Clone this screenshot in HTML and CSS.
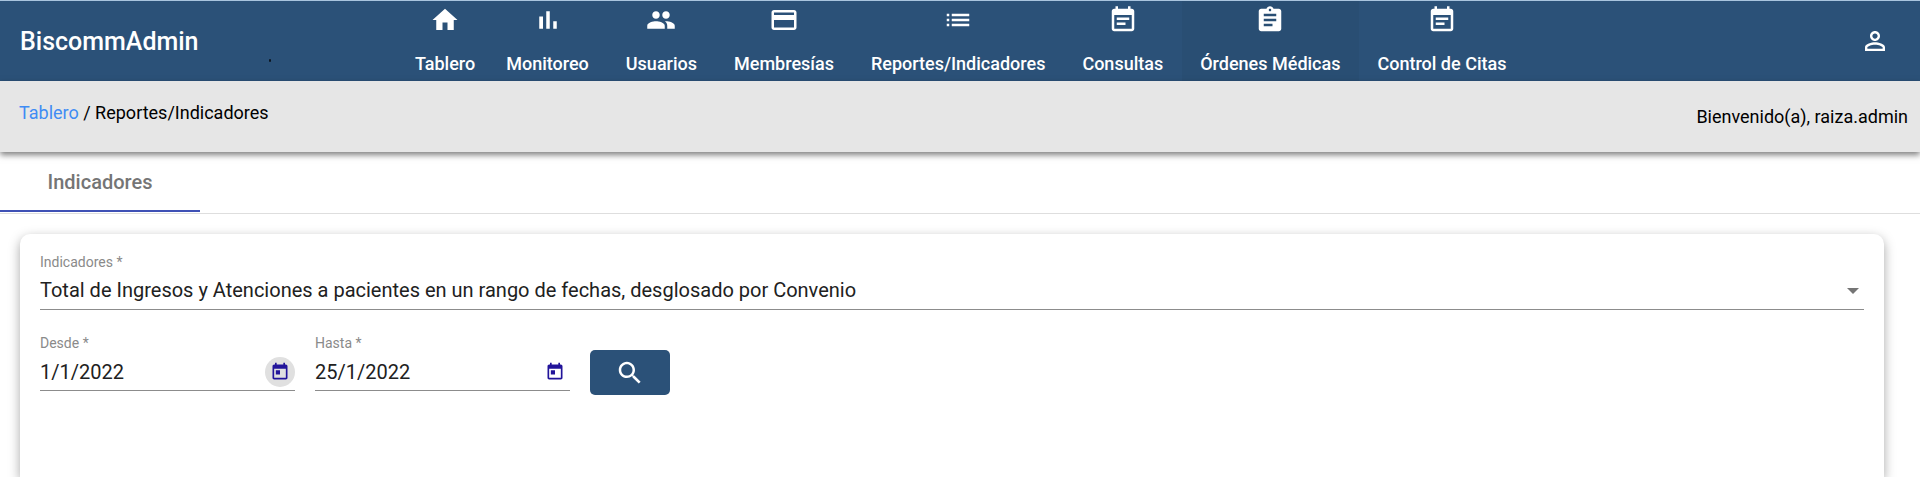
FILE: index.html
```html
<!DOCTYPE html>
<html lang="es">
<head>
<meta charset="utf-8">
<meta name="viewport" content="width=device-width, initial-scale=1">
<title>BiscommAdmin</title>
<link rel="stylesheet" href="styles.css">
</head>
<body>
<header class="topbar">
  <span class="brand">BiscommAdmin</span>
  <span class="dot" aria-hidden="true"></span>
  <nav class="nav">
    <a class="nav-item nav-item-home" href="#"><svg class="icon" viewBox="0 0 24 24"><path d="M10 20v-6h4v6h5v-8h3L12 3 2 12h3v8z"/></svg>Tablero</a>
    <a class="nav-item" href="#"><svg class="icon" viewBox="0 0 24 24"><path d="M5 9.2h3V19H5zM10.6 5h2.8v14h-2.8zm5.6 8H19v6h-2.800z"/></svg>Monitoreo</a>
    <a class="nav-item" href="#"><svg class="icon" viewBox="0 0 24 24"><path d="M16 11c1.660 0 2.990-1.340 2.990-3S17.660 5 16 5s-3 1.340-3 3 1.340 3 3 3zm-8 0c1.660 0 2.990-1.340 2.990-3S9.660 5 8 5 5 6.340 5 8s1.340 3 3 3zm0 2c-2.330 0-7 1.170-7 3.500V19h14v-2.500c0-2.330-4.670-3.500-7-3.500zm8 0c-.29 0-.62.020-.97.050 1.160.84 1.970 1.970 1.970 3.450V19h6v-2.500c0-2.330-4.670-3.500-7-3.500z"/></svg>Usuarios</a>
    <a class="nav-item" href="#"><svg class="icon" viewBox="0 0 24 24"><path d="M20 4H4c-1.110 0-1.990.89-1.990 2L2 18c0 1.110.89 2 2 2h16c1.110 0 2-.89 2-2V6c0-1.110-.89-2-2-2zm0 14H4v-6h16v6zm0-10H4V6h16v2z"/></svg>Membresías</a>
    <a class="nav-item" href="#"><svg class="icon" viewBox="0 0 24 24"><path d="M3 13h2v-2H3v2zm0 4h2v-2H3v2zm0-8h2V7H3v2zm4 4h14v-2H7v2zm0 4h14v-2H7v2zM7 7v2h14V7H7z"/></svg>Reportes/Indicadores</a>
    <a class="nav-item" href="#"><svg class="icon" viewBox="0 0 24 24"><path d="M17 10H7v2h10v-2zm2-7h-1V1h-2v2H8V1H6v2H5c-1.110 0-1.990.9-1.990 2L3 19c0 1.100.89 2 2 2h14c1.100 0 2-.9 2-2V5c0-1.100-.9-2-2-2zm0 16H5V8h14v11zm-5-5H7v2h7v-2z"/></svg>Consultas</a>
    <a class="nav-item nav-item-active" href="#"><svg class="icon" viewBox="0 0 24 24"><path d="M19 3h-4.180C14.400 1.840 13.300 1 12 1s-2.400.84-2.820 2H5c-1.100 0-2 .9-2 2v14c0 1.100.9 2 2 2h14c1.100 0 2-.9 2-2V5c0-1.100-.9-2-2-2zm-7 0c.55 0 1 .45 1 1s-.45 1-1 1-1-.45-1-1 .45-1 1-1zm2 14H7v-2h7v2zm3-4H7v-2h10v2zm0-4H7V7h10v2z"/></svg>Órdenes Médicas</a>
    <a class="nav-item" href="#"><svg class="icon" viewBox="0 0 24 24"><path d="M17 10H7v2h10v-2zm2-7h-1V1h-2v2H8V1H6v2H5c-1.110 0-1.990.9-1.990 2L3 19c0 1.100.89 2 2 2h14c1.100 0 2-.9 2-2V5c0-1.100-.9-2-2-2zm0 16H5V8h14v11zm-5-5H7v2h7v-2z"/></svg>Control de Citas</a>
  </nav>
  <button class="account" type="button" aria-label="Cuenta"><svg class="icon" viewBox="0 0 24 24"><path d="M12 5.900c1.160 0 2.100.94 2.100 2.100s-.94 2.100-2.100 2.100S9.900 9.160 9.900 8s.94-2.100 2.100-2.100m0 9c2.970 0 6.100 1.460 6.100 2.100v1.100H5.900V17c0-.64 3.130-2.100 6.100-2.100M12 4C9.790 4 8 5.790 8 8s1.790 4 4 4 4-1.790 4-4-1.790-4-4-4zm0 9c-2.670 0-8 1.340-8 4v3h16v-3c0-2.660-5.330-4-8-4z"/></svg></button>
</header>
<div class="subbar">
  <div class="crumbs"><a class="crumb-link" href="#">Tablero</a> / Reportes/Indicadores</div>
  <div class="welcome">Bienvenido(a), raiza.admin</div>
</div>
<div class="tabs" role="tablist">
  <button class="tab" type="button" role="tab" aria-selected="true">Indicadores</button>
</div>
<main class="card">
  <form>
    <div class="field">
      <label class="label" for="indicador">Indicadores *</label>
      <div class="control">
        <select class="input select" id="indicador"><option>Total de Ingresos y Atenciones a pacientes en un rango de fechas, desglosado por Convenio</option></select>
        <svg class="arrow" viewBox="0 0 12 6"><path d="M0 0h12L6 6z"/></svg>
      </div>
    </div>
    <div class="row">
      <div class="field field-date">
        <label class="label" for="desde">Desde *</label>
        <div class="control">
          <input class="input" id="desde" type="text" value="1/1/2022">
          <button class="picker picker-focused" type="button" aria-label="Elegir fecha desde"><svg class="icon-small" viewBox="0 0 24 24"><path d="M19 3h-1V1h-2v2H8V1H6v2H5c-1.110 0-1.990.9-1.990 2L3 19c0 1.100.89 2 2 2h14c1.100 0 2-.9 2-2V5c0-1.100-.9-2-2-2zm0 16H5V8h14v11zM7 10h5v5H7z"/></svg></button>
        </div>
      </div>
      <div class="field field-date">
        <label class="label" for="hasta">Hasta *</label>
        <div class="control">
          <input class="input" id="hasta" type="text" value="25/1/2022">
          <button class="picker" type="button" aria-label="Elegir fecha hasta"><svg class="icon-small" viewBox="0 0 24 24"><path d="M19 3h-1V1h-2v2H8V1H6v2H5c-1.110 0-1.990.9-1.990 2L3 19c0 1.100.89 2 2 2h14c1.100 0 2-.9 2-2V5c0-1.100-.9-2-2-2zm0 16H5V8h14v11zM7 10h5v5H7z"/></svg></button>
        </div>
      </div>
      <button class="search" type="submit" aria-label="Buscar"><svg class="icon" viewBox="0 0 24 24"><path d="M15.500 14h-.79l-.28-.27C15.410 12.590 16 11.110 16 9.500 16 5.910 13.090 3 9.500 3S3 5.910 3 9.500 5.910 16 9.500 16c1.610 0 3.090-.59 4.230-1.570l.27.28v.79l5 4.990L20.490 19l-4.990-5zm-6 0C7.010 14 5 11.990 5 9.500S7.010 5 9.500 5 14 7.010 14 9.500 11.990 14 9.500 14z"/></svg></button>
    </div>
  </form>
</main>
</body>
</html>
```
FILE: styles.css
```css
* {
  box-sizing: border-box;
}

html,
body {
  min-height: 100%;
}

html {
  display: flex;
  flex-direction: column;
}

body {
  flex: 1;
  display: flex;
  flex-direction: column;
  margin: 0;
  background: #fff;
  color: #000;
  font-family: Roboto, "Liberation Sans", sans-serif;
  font-size: 18px;
  line-height: 24px;
}

button,
input,
select {
  margin: 0;
  padding: 0;
  border: 0;
  background: none;
  color: inherit;
  font: inherit;
}

a {
  text-decoration: none;
}

svg {
  display: block;
  fill: currentColor;
}

.icon {
  width: 30px;
  height: 30px;
}

.icon-small {
  width: 20px;
  height: 20px;
}

.topbar {
  display: flex;
  align-items: stretch;
  height: 81px;
  padding: 0 30px 0 20px;
  border-top: 1px solid #a9c4de;
  background: #2b5178;
  color: #fff;
}

.brand {
  align-self: center;
  width: 249px;
  padding-top: 2px;
  font-size: 25px;
  font-weight: 500;
  line-height: 32px;
}

.dot {
  align-self: flex-end;
  width: 2px;
  height: 3px;
  margin-bottom: 19px;
  border-radius: 1px;
  background: #0b1622;
}

.nav {
  display: flex;
  flex: 1;
  margin-left: 126px;
}

.nav-item {
  display: flex;
  flex-direction: column;
  align-items: center;
  gap: 17px;
  padding: 4px 19px 0 18px;
  color: #fff;
  font-weight: 500;
  white-space: nowrap;
}

.nav-item-home {
  margin-right: -6px;
}

.nav-item-active {
  background: #294e73;
}

.account {
  align-self: center;
  cursor: pointer;
}

.subbar {
  display: flex;
  justify-content: space-between;
  padding: 20px 12px 23px 19px;
  background: #e6e6e6;
  box-shadow: 0 3px 6px rgba(0, 0, 0, 0.5);
}

.crumbs {
  padding-bottom: 4px;
}

.crumb-link {
  color: #3f8cf4;
}

.welcome {
  padding-top: 4px;
}

.tabs {
  display: flex;
  padding-bottom: 1px;
  border-bottom: 1px solid #dedede;
}

.tab {
  width: 200px;
  height: 60px;
  padding-top: 2px;
  border-bottom: 2px solid #3f51b5;
  color: #757575;
  font-size: 20px;
  font-weight: 500;
}

.card {
  flex: 1;
  margin: 20px 36px 0 20px;
  padding: 18px 20px;
  border-radius: 10px 10px 0 0;
  background: #fff;
  box-shadow: 0 4px 12px rgba(0, 0, 0, 0.35);
}

.field {
  display: flex;
  flex-direction: column;
}

.label {
  color: #8a8a8a;
  font-size: 14px;
  line-height: 20px;
}

.control {
  display: flex;
  align-items: center;
  height: 38px;
  border-bottom: 1px solid #8c8c8c;
}

.input {
  flex: 1;
  min-width: 0;
  height: 30px;
  outline: 0;
  color: #212121;
  font-size: 20px;
}

.select {
  padding-bottom: 2px;
  appearance: none;
}

.arrow {
  width: 12px;
  height: 6px;
  margin-right: 5px;
  color: #757575;
}

.row {
  display: flex;
  align-items: flex-end;
  gap: 20px;
  margin-top: 23px;
}

.field-date {
  width: 255px;
  margin-bottom: 4px;
}

.picker {
  display: flex;
  align-items: center;
  justify-content: center;
  width: 30px;
  height: 30px;
  border-radius: 50%;
  color: #22149a;
}

.picker-focused {
  background: #e0e0e0;
}

.search {
  display: flex;
  align-items: center;
  justify-content: center;
  width: 80px;
  height: 45px;
  border-radius: 5px;
  background: #2b5178;
  color: #fff;
}
```
